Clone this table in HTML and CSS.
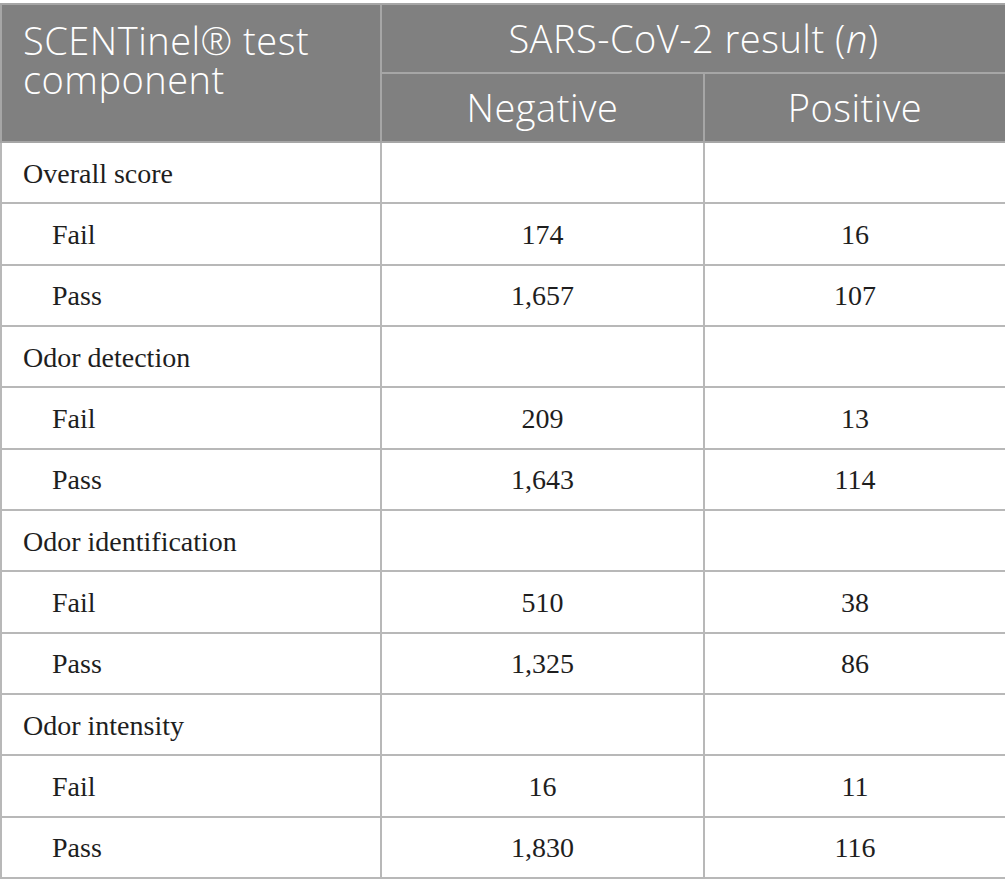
FILE: index.html
```html
<!DOCTYPE html>
<html>
<head>
<meta charset="utf-8">
<link rel="stylesheet" href="styles.css">
</head>
<body>
<table class="data">
  <colgroup>
    <col class="c1"><col class="c2"><col class="c3">
  </colgroup>
  <thead>
    <tr class="h1">
      <th rowspan="2" class="first">SCENTinel® test component</th>
      <th colspan="2">SARS-CoV-2 result (<i>n</i>)</th>
    </tr>
    <tr class="h2">
      <th>Negative</th>
      <th>Positive</th>
    </tr>
  </thead>
  <tbody>
    <tr><td class="cat">Overall score</td><td></td><td></td></tr>
    <tr><td class="sub">Fail</td><td>174</td><td>16</td></tr>
    <tr><td class="sub">Pass</td><td>1,657</td><td>107</td></tr>
    <tr><td class="cat">Odor detection</td><td></td><td></td></tr>
    <tr><td class="sub">Fail</td><td>209</td><td>13</td></tr>
    <tr><td class="sub">Pass</td><td>1,643</td><td>114</td></tr>
    <tr><td class="cat">Odor identification</td><td></td><td></td></tr>
    <tr><td class="sub">Fail</td><td>510</td><td>38</td></tr>
    <tr><td class="sub">Pass</td><td>1,325</td><td>86</td></tr>
    <tr><td class="cat">Odor intensity</td><td></td><td></td></tr>
    <tr><td class="sub">Fail</td><td>16</td><td>11</td></tr>
    <tr><td class="sub">Pass</td><td>1,830</td><td>116</td></tr>
  </tbody>
</table>
</body>
</html>
```

FILE: styles.css
```css
html, body {
  margin: 0;
  padding: 0;
  background: #ffffff;
}
body {
  padding-top: 3px;
}
.data {
  border-collapse: collapse;
  width: 1005px;
  table-layout: fixed;
}
.c1 { width: 380px; }
.c2 { width: 323px; }
.c3 { width: 302px; }
.data th {
  background: #808080;
  color: #ffffff;
  font-family: "Open Sans", sans-serif;
  font-weight: 350;
  font-size: 38px;
  line-height: 39px;
  letter-spacing: 0.5px;
  border: 2px solid #a6a6a6;
  text-align: center;
  padding: 0 20px;
  height: 67px;
}
.data th.first {
  text-align: left;
  vertical-align: top;
  padding: 16px 20px 0 21px;
}
.data th i {
  font-style: italic;
}
.data td {
  font-family: "Liberation Serif", "Times New Roman", serif;
  font-size: 28px;
  color: #1e1e1e;
  border: 2px solid #b8b8b8;
  height: 57.35px;
  padding: 2px 20px 0 20px;
  text-align: center;
  vertical-align: middle;
}
.data td.cat {
  text-align: left;
  padding-left: 21px;
}
.data td.sub {
  text-align: left;
  padding-left: 50px;
}
```
